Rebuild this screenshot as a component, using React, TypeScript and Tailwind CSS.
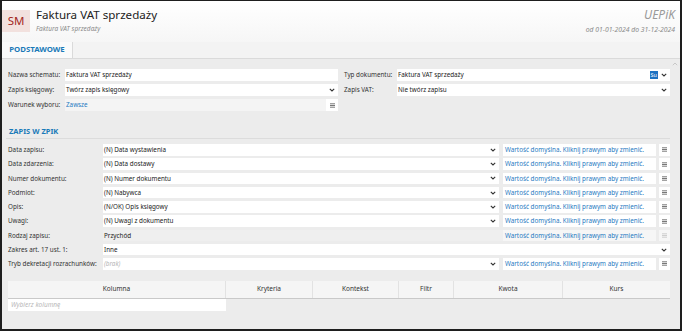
import React from 'react'

const font = { fontFamily: '"Noto Sans", "Open Sans", sans-serif' }

const Chevron: React.FC = () => (
  <svg width="6" height="4" viewBox="0 0 6 4" className="shrink-0">
    <path d="M0.8 0.8 L3 3 L5.2 0.8" fill="none" stroke="#333" strokeWidth="1.1" />
  </svg>
)

const Burger: React.FC<{ faded?: boolean }> = ({ faded }) => (
  <svg width="5" height="5" viewBox="0 0 5 5">
    <g stroke={faded ? '#c4c4c4' : '#555'} strokeWidth="0.8">
      <line x1="0" y1="0.8" x2="5" y2="0.8" />
      <line x1="0" y1="2.5" x2="5" y2="2.5" />
      <line x1="0" y1="4.2" x2="5" y2="4.2" />
    </g>
  </svg>
)

const DEFAULT_TEXT = 'Wartość domyślna. Kliknij prawym aby zmienić.'

interface ZpikRow {
  label: string
  value: string
  kind: 'select' | 'plain' | 'full' | 'empty'
}

const zpikRows: ZpikRow[] = [
  { label: 'Data zapisu:', value: '(N) Data wystawienia', kind: 'select' },
  { label: 'Data zdarzenia:', value: '(N) Data dostawy', kind: 'select' },
  { label: 'Numer dokumentu:', value: '(N) Numer dokumentu', kind: 'select' },
  { label: 'Podmiot:', value: '(N) Nabywca', kind: 'select' },
  { label: 'Opis:', value: '(N/OK) Opis księgowy', kind: 'select' },
  { label: 'Uwagi:', value: '(N) Uwagi z dokumentu', kind: 'select' },
  { label: 'Rodzaj zapisu:', value: 'Przychód', kind: 'plain' },
  { label: 'Zakres art. 17 ust. 1:', value: 'Inne', kind: 'full' },
  { label: 'Tryb dekretacji rozrachunków:', value: '(brak)', kind: 'empty' },
]

const columns = [
  { name: 'Kolumna', w: 'w-[218px]' },
  { name: 'Kryteria', w: 'w-[87px]' },
  { name: 'Kontekst', w: 'w-[86px]' },
  { name: 'Filtr', w: 'w-[55px]' },
  { name: 'Kwota', w: 'w-[109px]' },
  { name: 'Kurs', w: 'flex-1' },
]

const App: React.FC = () => {
  return (
    <div
      style={font}
      className="w-[682px] h-[331px] border-t border-x-2 border-b-2 border-[#1e1e1e] bg-[#ececec] flex flex-col overflow-hidden text-[#333]"
    >
      {/* header */}
      <div className="h-[41px] shrink-0 flex items-start bg-gradient-to-b from-white to-[#f6f6f6]">
        <div className="mt-[9px] w-[28px] h-[22px] bg-[#f2e1de] flex items-center justify-center text-[11.5px] text-[#a3281e]">
          SM
        </div>
        <div className="ml-[6px] mt-[6px] flex flex-col">
          <span className="text-[11.6px] leading-[16px] text-[#222]">Faktura VAT sprzedaży</span>
          <span className="text-[6.5px] leading-[9px] italic text-[#8a8a8a] mt-[1px]">Faktura VAT sprzedaży</span>
        </div>
        <div className="ml-auto mr-[5px] mt-[6px] flex flex-col items-end">
          <span className="text-[12px] leading-[16px] italic text-[#9a9a9a]">UEPiK</span>
          <span className="text-[6.8px] leading-[9px] italic text-[#8a8a8a] mt-[2px]">od 01-01-2024 do 31-12-2024</span>
        </div>
      </div>

      {/* tabs */}
      <div className="h-[17px] shrink-0 flex bg-[#f3f3f3] border-b border-[#dadada]">
        <div className="w-[71px] bg-[#fafafa] border-r border-[#dadada] flex items-center justify-center text-[7.8px] font-bold text-[#1a7ab8]">
          PODSTAWOWE
        </div>
      </div>

      <div className="relative flex-1 pl-[6px] pr-[10px] pt-[10px]">
        <svg width="6" height="4" viewBox="0 0 6 4" className="absolute right-[2px] top-[3px]">
          <path d="M0.8 3.2 L3 1 L5.2 3.2" fill="none" stroke="#c8c8c8" strokeWidth="1" />
        </svg>

        {/* basic form */}
        <div className="flex gap-[6px] text-[6.3px] whitespace-nowrap">
          <div className="w-[330px] flex flex-col gap-[3px]">
            <div className="flex items-center h-[12px]">
              <span className="w-[57px] shrink-0">Nazwa schematu:</span>
              <div className="flex-1 h-full bg-white flex items-center px-[1px] text-[#222]">Faktura VAT sprzedaży</div>
            </div>
            <div className="flex items-center h-[12px]">
              <span className="w-[57px] shrink-0">Zapis księgowy:</span>
              <div className="flex-1 h-full bg-white flex items-center pl-[1px] pr-[3px] text-[#222]">
                <span className="flex-1">Twórz zapis księgowy</span>
                <Chevron />
              </div>
            </div>
            <div className="flex items-center h-[12px]">
              <span className="w-[57px] shrink-0">Warunek wyboru:</span>
              <div className="flex-1 h-full bg-[#f4f4f4] flex items-center pl-[1px] text-[#1f7ac2]">
                <span className="flex-1">Zawsze</span>
                <div className="w-[12px] h-full bg-white flex items-center justify-center">
                  <Burger />
                </div>
              </div>
            </div>
          </div>
          <div className="flex-1 flex flex-col gap-[3px]">
            <div className="flex items-center h-[12px]">
              <span className="w-[53px] shrink-0">Typ dokumentu:</span>
              <div className="flex-1 h-full bg-white flex items-center pl-[1px] pr-[3px] text-[#222]">
                <span className="flex-1">Faktura VAT sprzedaży</span>
                <span className="bg-[#1d72c2] text-white text-[5.5px] leading-[8px] px-[1px] mr-[3px]">Su</span>
                <Chevron />
              </div>
            </div>
            <div className="flex items-center h-[12px]">
              <span className="w-[53px] shrink-0">Zapis VAT:</span>
              <div className="flex-1 h-full bg-white flex items-center pl-[1px] pr-[3px] text-[#222]">
                <span className="flex-1">Nie twórz zapisu</span>
                <Chevron />
              </div>
            </div>
          </div>
        </div>

        {/* ZAPIS W ZPIK */}
        <div className="mt-[15px] pl-[1px] text-[7.5px] font-bold text-[#1a7ab8] leading-[10px]">ZAPIS W ZPIK</div>
        <div className="mt-[2px] h-px bg-[#dcdcdc] -ml-[2px]" />

        <div className="mt-[5px] flex flex-col gap-[2.75px] text-[6.3px] whitespace-nowrap">
          {zpikRows.map((r) => (
            <div key={r.label} className="flex items-center h-[11.5px]">
              <span className="w-[95px] shrink-0">{r.label}</span>
              {r.kind === 'full' ? (
                <div className="flex-1 h-full bg-white flex items-center pl-[1px] pr-[3px] text-[#222]">
                  <span className="flex-1">{r.value}</span>
                  <Chevron />
                </div>
              ) : (
                <>
                  {r.kind === 'plain' ? (
                    <div className="w-[400px] h-full bg-[#efefef] flex items-center pl-[1px] text-[#222]">{r.value}</div>
                  ) : (
                    <div className="w-[396px] h-full bg-white flex items-center pl-[1px] pr-[3px] text-[#222]">
                      <span className={r.kind === 'empty' ? 'flex-1 italic text-[#b5b5b5]' : 'flex-1'}>{r.value}</span>
                      <Chevron />
                    </div>
                  )}
                  <div
                    className={
                      r.kind === 'plain'
                        ? 'w-[153px] h-full bg-[#f6f6f6] flex items-center pl-[2px] text-[#1f7ac2]'
                        : 'ml-[4px] w-[153px] h-full bg-white flex items-center pl-[2px] text-[#1f7ac2]'
                    }
                  >
                    {DEFAULT_TEXT}
                  </div>
                  <div
                    className={
                      r.kind === 'plain'
                        ? 'ml-[3px] flex-1 h-full bg-[#f6f6f6] flex items-center justify-center'
                        : 'ml-[3px] flex-1 h-full bg-white flex items-center justify-center'
                    }
                  >
                    <Burger faded={r.kind === 'plain'} />
                  </div>
                </>
              )}
            </div>
          ))}
        </div>

        {/* table */}
        <div className="mt-[11px] flex h-[18px] bg-[#f5f5f5] border-b border-[#c9c9c9] text-[6.5px] text-[#333]">
          {columns.map((c, i) => (
            <div
              key={c.name}
              className={
                i === columns.length - 1
                  ? `${c.w} flex items-center justify-center`
                  : `${c.w} flex items-center justify-center border-r border-[#e2e2e2]`
              }
            >
              {c.name}
            </div>
          ))}
        </div>
        <div className="w-[218px] h-[12px] bg-white flex items-center pl-[3px] text-[6.5px] italic text-[#b8b8b8]">
          Wybierz kolumnę
        </div>
      </div>
    </div>
  )
}

export default App
